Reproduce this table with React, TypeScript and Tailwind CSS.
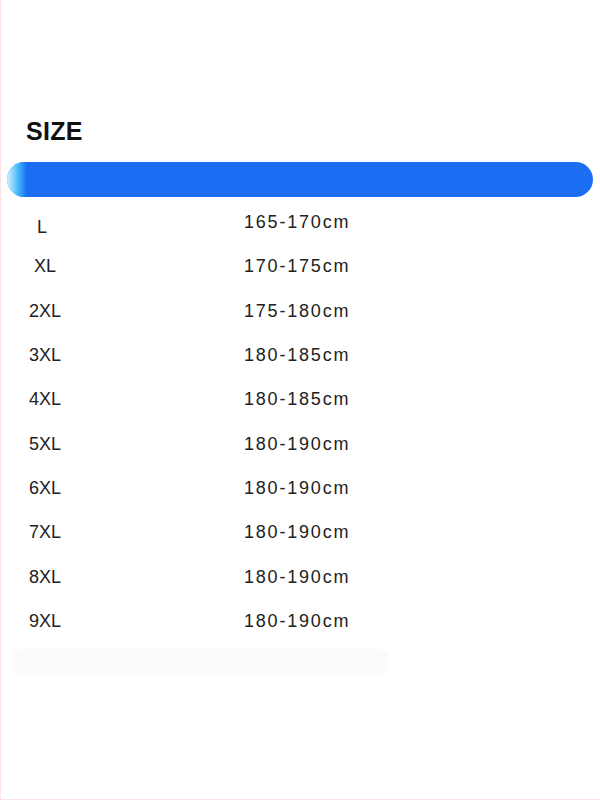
import React from "react";

const rows: { size: string; range: string; adj?: string }[] = [
  { size: "L", range: "165-170cm", adj: "pt-[10px] pr-[6px]" },
  { size: "XL", range: "170-175cm" },
  { size: "2XL", range: "175-180cm" },
  { size: "3XL", range: "180-185cm" },
  { size: "4XL", range: "180-185cm" },
  { size: "5XL", range: "180-190cm" },
  { size: "6XL", range: "180-190cm" },
  { size: "7XL", range: "180-190cm" },
  { size: "8XL", range: "180-190cm" },
  { size: "9XL", range: "180-190cm" },
];

export default function App() {
  return (
    <div
      className="w-[600px] h-[800px] bg-white border-l border-b border-[#fde3e3] flex flex-col overflow-hidden"
      style={{ fontFamily: '"Liberation Sans", Arial, sans-serif' }}
    >
      <div className="pt-[119px] pl-[25px] text-[25px] leading-[25px] font-bold text-[#111111] tracking-[0.3px]">
        SIZE
      </div>
      <div className="relative mt-[18px] ml-[6px] w-[586px] h-[35px] rounded-full bg-[#1b6ef3] overflow-hidden">
        <div className="absolute left-0 top-0 h-full w-[20px] bg-gradient-to-r from-[#e6fdff] via-[#52c8fb] to-[#1b6ef3] opacity-90" />
      </div>
      <div className="mt-[3px] flex flex-col">
        {rows.map((r) => (
          <div key={r.size} className="h-[44.3px] flex items-center text-[18px] leading-[18px] text-[#222222]">
            <div className={`ml-[26px] w-[36px] text-center ${r.adj ?? ""}`}>{r.size}</div>
            <div className="ml-[181px] tracking-[1.8px]">{r.range}</div>
          </div>
        ))}
      </div>
      <div className="mt-[6px] ml-[11px] w-[377px] h-[28px] rounded-[10px] bg-[#fbfbfb]" />
    </div>
  );
}
